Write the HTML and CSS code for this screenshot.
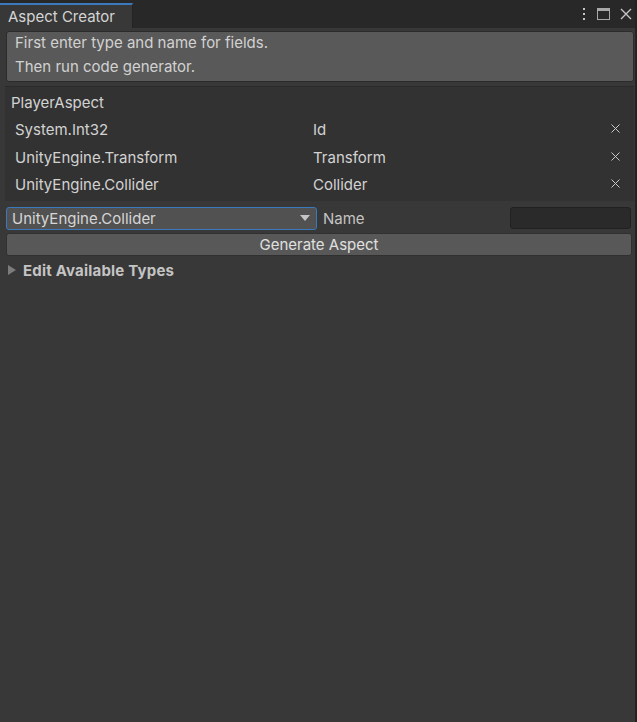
FILE: index.html
```html
<!DOCTYPE html>
<html>
<head>
<meta charset="utf-8">
<link rel="stylesheet" href="styles.css">
</head>
<body>
<div class="window">
  <div class="tabbar">
    <div class="tab"><span class="tab-title">Aspect Creator</span></div>
    <div class="tab-tools">
      <svg class="ico" width="6" height="14" viewBox="0 0 6 14"><rect x="2" y="1" width="2" height="2" fill="#c4c4c4"/><rect x="2" y="6" width="2" height="2" fill="#c4c4c4"/><rect x="2" y="11" width="2" height="2" fill="#c4c4c4"/></svg>
      <svg class="ico" width="13" height="12" viewBox="0 0 13 12"><rect x="0.5" y="0.5" width="12" height="11" fill="none" stroke="#a8a8a8"/><rect x="0.5" y="0.5" width="12" height="2.5" fill="#a8a8a8"/></svg>
      <svg class="ico" width="12" height="12" viewBox="0 0 12 12"><path d="M1 1L11 11M11 1L1 11" stroke="#c4c4c4" stroke-width="1.4"/></svg>
    </div>
  </div>
  <div class="content">
    <div class="helpbox">
      <div class="help-line">First enter type and name for fields.</div>
      <div class="help-line">Then run code generator.</div>
    </div>
    <div class="listbox">
      <div class="list-header">PlayerAspect</div>
      <div class="row"><span class="c1">System.Int32</span><span class="c2">Id</span><svg class="x" width="9" height="9" viewBox="0 0 9 9"><path d="M0.5 0.5L8.5 8.5M8.5 0.5L0.5 8.5" stroke="#c8c8c8" stroke-width="1"/></svg></div>
      <div class="row"><span class="c1">UnityEngine.Transform</span><span class="c2">Transform</span><svg class="x" width="9" height="9" viewBox="0 0 9 9"><path d="M0.5 0.5L8.5 8.5M8.5 0.5L0.5 8.5" stroke="#c8c8c8" stroke-width="1"/></svg></div>
      <div class="row"><span class="c1">UnityEngine.Collider</span><span class="c2">Collider</span><svg class="x" width="9" height="9" viewBox="0 0 9 9"><path d="M0.5 0.5L8.5 8.5M8.5 0.5L0.5 8.5" stroke="#c8c8c8" stroke-width="1"/></svg></div>
    </div>
    <div class="input-row">
      <div class="dropdown"><span>UnityEngine.Collider</span><svg width="10" height="6" viewBox="0 0 10 6"><path d="M0 0H10L5 6Z" fill="#c4c4c4"/></svg></div>
      <span class="name-label">Name</span>
      <div class="textfield"></div>
    </div>
    <div class="button">Generate Aspect</div>
    <div class="foldout"><svg width="8" height="10" viewBox="0 0 8 10"><path d="M0 0L8 5L0 10Z" fill="#7c7c7c"/></svg><span>Edit Available Types</span></div>
  </div>
</div>
</body>
</html>
```
FILE: styles.css
```css
html, body {
  margin: 0;
  padding: 0;
  background: #383838;
  width: 637px;
  height: 722px;
  overflow: hidden;
}
.window {
  width: 637px;
  height: 722px;
  display: flex;
  flex-direction: column;
  font-family: Inter, "Noto Sans", sans-serif;
  font-size: 15px;
  color: #d2d2d2;
  background: #383838;
  box-sizing: border-box;
  border-right: 2px solid #232323;
}
.tabbar {
  height: 28px;
  background: #282828;
  display: flex;
  align-items: flex-end;
  justify-content: space-between;
  flex-shrink: 0;
}
.tab {
  width: 133px;
  height: 25px;
  background: #383838;
  border-top: 2px solid #3a79bb;
  border-right: 1px solid #232323;
  box-sizing: border-box;
  display: flex;
  align-items: center;
  padding-left: 8px;
  padding-top: 0;
}
.tab-title {
  color: #d4d4d4;
}
.tab-tools {
  display: flex;
  align-items: center;
  gap: 10px;
  height: 28px;
  padding-right: 3px;
}
.ico { display: block; }
.content {
  flex: 1;
  display: flex;
  flex-direction: column;
  padding: 3px 1px 0 6px;
}
.helpbox {
  height: 51px;
  background: #595959;
  border: 1px solid #2b2b2b;
  border-radius: 3px;
  box-sizing: border-box;
  padding: 0 8px 3px;
  display: flex;
  flex-direction: column;
  justify-content: center;
}
.help-line { color: #d2d2d2; line-height: 24px; }
.listbox {
  margin-top: 4px;
  height: 115px;
  background: #323232;
  border-top: 1px solid #2a2a2a;
  box-sizing: border-box;
  margin-left: -1px;
  padding: 0 0 0 6px;
}
.list-header {
  height: 29px;
  line-height: 31px;
  color: #d2d2d2;
}
.row {
  display: flex;
  align-items: center;
  height: 27.5px;
  padding-left: 4px;
}
.c1 { width: 298px; }
.c2 { flex: 1; }
.x {
  display: block;
  margin-right: 14px;
  margin-top: -2px;
}
.input-row {
  display: flex;
  align-items: center;
  height: 24px;
  margin-top: 5px;
}
.dropdown {
  width: 311px;
  height: 23px;
  box-sizing: border-box;
  background: #515151;
  border: 1px solid #3a79bb;
  border-radius: 3px;
  display: flex;
  align-items: center;
  justify-content: space-between;
  padding: 0 6px 0 5px;
  color: #d6d6d6;
}
.name-label {
  margin-left: 6px;
  color: #c4c4c4;
  flex: 1;
}
.textfield {
  width: 121px;
  height: 22px;
  box-sizing: border-box;
  background: #2a2a2a;
  border: 1px solid #212121;
  border-radius: 3px;
  margin-right: 3px;
}
.button {
  margin-top: 3px;
  height: 23px;
  box-sizing: border-box;
  background: #585858;
  border: 1px solid #303030;
  border-radius: 3px;
  margin-right: 2px;
  text-align: center;
  line-height: 21px;
  color: #e0e0e0;
}
.foldout {
  margin-top: 4px;
  margin-left: 2px;
  display: flex;
  align-items: center;
  gap: 7px;
  font-weight: bold;
  color: #c4c4c4;
  height: 20px;
  letter-spacing: 0.2px;
}
```
